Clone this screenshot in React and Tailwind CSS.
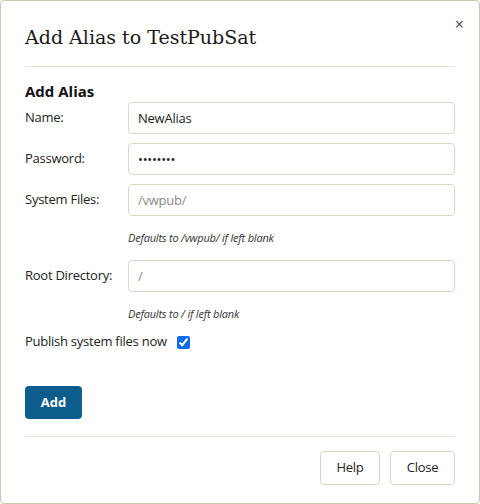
import React from 'react';

const sans = { fontFamily: '"Open Sans", "Noto Sans", sans-serif' };

function Field({ label, value, placeholder, type = 'text', hint }) {
  return (
    <div>
      <div className="flex items-center">
        <label className="w-[103px] shrink-0 text-[13px] tracking-[-0.25px] text-[#222]">{label}</label>
        <input
          type={type}
          defaultValue={value}
          placeholder={placeholder}
          className="h-[32px] flex-1 rounded-[4px] border border-[#dcd6c4] bg-white px-[9px] text-[13px] tracking-[-0.25px] text-[#222] outline-none placeholder:text-[#8a8a8a]"
        />
      </div>
      {hint && (
        <div className="ml-[103px] mt-[14px] text-[11px] italic tracking-[-0.2px] text-[#333]">{hint}</div>
      )}
    </div>
  );
}

export default function App() {
  return (
    <div className="h-[504px] w-[480px] bg-white" style={sans}>
      <div className="relative flex h-full w-full flex-col rounded-[4px] border border-[#cdc6b0] px-[24px]">
        <button className="absolute right-[15px] top-[15px] text-[16px] leading-none text-[#444]">×</button>

        <h1
          className="pt-[22px] text-[19px] leading-[28px] text-[#1a1a1a]"
          style={{ fontFamily: '"DejaVu Serif", serif' }}
        >
          Add Alias to TestPubSat
        </h1>
        <div className="mt-[15px] border-t border-[#e6e2d6]" />

        <h2 className="mt-[14px] text-[15px] font-bold leading-[20px] text-[#111]">Add Alias</h2>

        <div className="mt-[1px] flex flex-col gap-[9px]">
          <Field label="Name:" value="NewAlias" />
          <Field label="Password:" value="password" type="password" />
          <Field label="System Files:" placeholder="/vwpub/" hint="Defaults to /vwpub/ if left blank" />
          <div className="mt-[4px]">
            <Field label="Root Directory:" placeholder="/" hint="Defaults to / if left blank" />
          </div>
        </div>

        <label className="mt-[10px] flex h-[20px] items-center gap-[10px] text-[13px] tracking-[-0.25px] text-[#222]">
          Publish system files now
          <input type="checkbox" defaultChecked className="h-[13px] w-[13px] accent-[#0b6cf0]" />
        </label>

        <div className="mt-[34px]">
          <button className="h-[33px] w-[57px] rounded-[4px] bg-[#0c5c8c] text-[13px] font-bold text-white">Add</button>
        </div>

        <div className="mt-[17px] border-t border-[#e6e2d6]" />

        <div className="mt-[14px] flex justify-end gap-[10px]">
          <button className="h-[34px] w-[60px] rounded-[4px] border border-[#d9d3c1] bg-white text-[13px] tracking-[-0.25px] text-[#222]">Help</button>
          <button className="h-[34px] w-[65px] rounded-[4px] border border-[#d9d3c1] bg-white text-[13px] tracking-[-0.25px] text-[#222]">Close</button>
        </div>
      </div>
    </div>
  );
}
